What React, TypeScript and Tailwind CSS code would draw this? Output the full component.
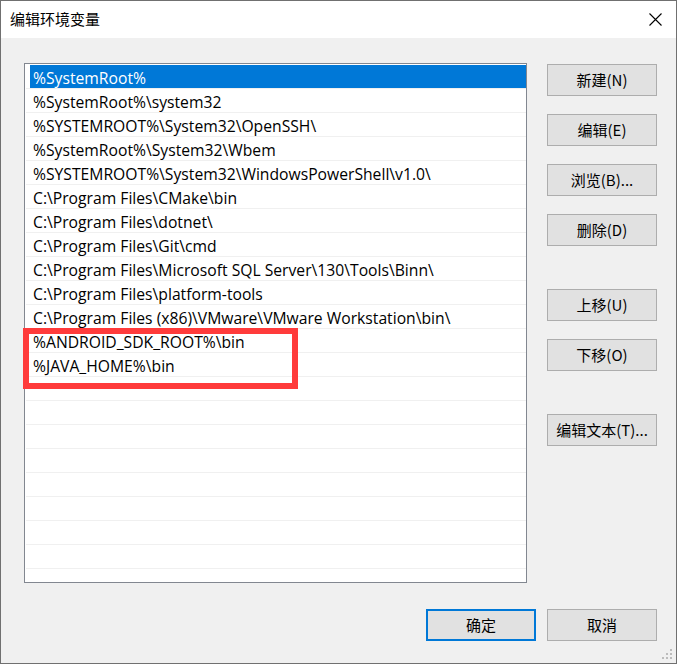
import React from 'react';

const paths = [
  '%SystemRoot%',
  '%SystemRoot%\\system32',
  '%SYSTEMROOT%\\System32\\OpenSSH\\',
  '%SystemRoot%\\System32\\Wbem',
  '%SYSTEMROOT%\\System32\\WindowsPowerShell\\v1.0\\',
  'C:\\Program Files\\CMake\\bin',
  'C:\\Program Files\\dotnet\\',
  'C:\\Program Files\\Git\\cmd',
  'C:\\Program Files\\Microsoft SQL Server\\130\\Tools\\Binn\\',
  'C:\\Program Files\\platform-tools',
  'C:\\Program Files (x86)\\VMware\\VMware Workstation\\bin\\',
  '%ANDROID_SDK_ROOT%\\bin',
  '%JAVA_HOME%\\bin',
];

const cjk = { fontFamily: '"Noto Sans CJK SC", "Liberation Sans", sans-serif' };
const latin = { fontFamily: '"Open Sans", "Noto Sans CJK SC", sans-serif' };

function Btn({ label, focused = false }: { label: string; focused?: boolean }) {
  return (
    <button
      className={
        'w-[110px] h-[32px] flex items-center justify-center pb-[2px] bg-[#e1e1e1] text-[15px] leading-none text-black ' +
        (focused ? 'border-2 border-[#0078d7]' : 'border border-[#adadad]')
      }
      style={cjk}
    >
      {label}
    </button>
  );
}

export default function App() {
  const rows = Array.from({ length: 22 }, (_, i) => paths[i] ?? '');

  return (
    <div className="relative w-[677px] h-[664px] border border-[#707070] flex flex-col bg-[#f0f0f0] overflow-hidden">
      {/* title bar */}
      <div className="h-[37px] bg-white flex items-center justify-between pl-[9px] pr-[14px] pb-[2px]">
        <span className="text-[15px] text-black leading-none" style={cjk}>
          编辑环境变量
        </span>
        <svg width="13" height="13" viewBox="0 0 13 13" className="mt-px">
          <path d="M0.5 0.5 L12.5 12.5 M12.5 0.5 L0.5 12.5" stroke="#000" strokeWidth="1.1" fill="none" />
        </svg>
      </div>

      {/* body */}
      <div className="flex-1 flex flex-col pt-[25px] pl-[23px] pr-[19px]">
        <div className="flex gap-[20px]">
          <div className="w-[503px] h-[520px] border border-[#828790] bg-white pt-px overflow-hidden">
            {rows.map((p, i) => (
              <div key={i} className="ml-px h-[24px] border-b border-[#f0f0f0] flex">
                <div
                  className={
                    'ml-[4px] flex-1 h-[23px] flex items-center pl-[3px] pt-[4px] text-[15.7px] leading-none whitespace-nowrap ' +
                    (i === 0 ? 'bg-[#0078d7] text-white' : 'text-black')
                  }
                  style={latin}
                >
                  {p}
                </div>
              </div>
            ))}
          </div>

          <div className="flex flex-col mt-px">
            <div className="flex flex-col gap-[18px]">
              <Btn label="新建(N)" />
              <Btn label="编辑(E)" />
              <Btn label="浏览(B)..." />
              <Btn label="删除(D)" />
            </div>
            <div className="flex flex-col gap-[18px] mt-[43px]">
              <Btn label="上移(U)" />
              <Btn label="下移(O)" />
            </div>
            <div className="mt-[43px]">
              <Btn label="编辑文本(T)..." />
            </div>
          </div>
        </div>

        <div className="flex justify-end gap-[11px] mt-[26px]">
          <Btn label="确定" focused />
          <Btn label="取消" />
        </div>
      </div>

      {/* annotation */}
      <div className="absolute left-[22px] top-[327px] w-[275px] h-[61px] border-[6px] border-[#ff3b3b]" />

      {/* size grip */}
      <svg className="absolute right-[3px] bottom-[3px]" width="11" height="11" viewBox="0 0 11 11">
        <g fill="#bcbcbc">
          <rect x="8" y="0" width="2" height="2" />
          <rect x="4" y="4" width="2" height="2" />
          <rect x="8" y="4" width="2" height="2" />
          <rect x="0" y="8" width="2" height="2" />
          <rect x="4" y="8" width="2" height="2" />
          <rect x="8" y="8" width="2" height="2" />
        </g>
      </svg>
    </div>
  );
}
